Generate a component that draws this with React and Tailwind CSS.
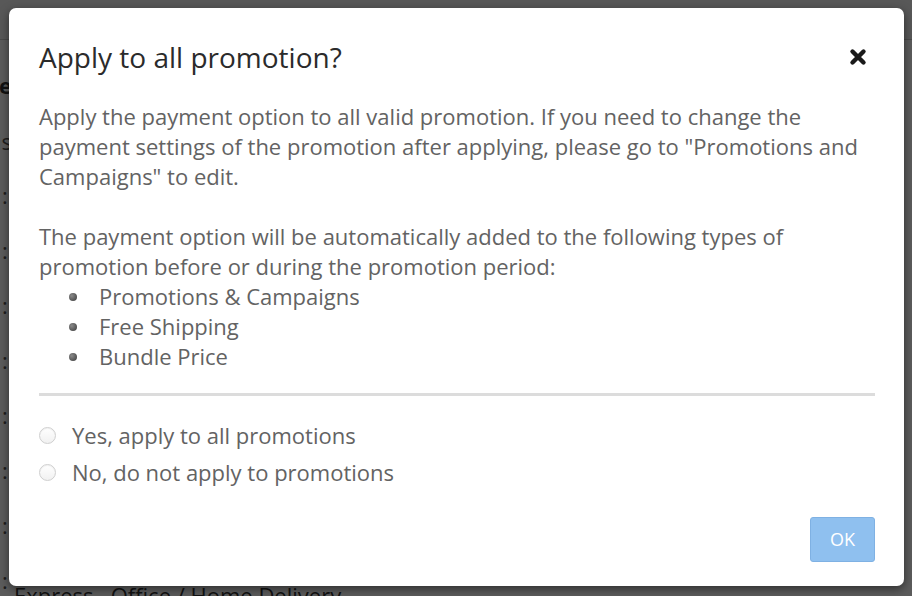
const font = { fontFamily: '"Open Sans", "Noto Sans", Arial, sans-serif' };

function Bullet() {
  return <span className="mt-[1px] h-[8px] w-[8px] shrink-0 rounded-full bg-[radial-gradient(circle_at_35%_35%,#8a8a8a,#3a3a3a)]" />;
}

function Radio({ label }) {
  return (
    <label className="flex h-[37px] items-center gap-[16px]">
      <span className="h-[17px] w-[17px] shrink-0 rounded-full border border-[#cfcfcf] bg-[linear-gradient(#ffffff,#f1f1f1)] shadow-[inset_0_1px_1px_rgba(0,0,0,0.06)]" />
      <span>{label}</span>
    </label>
  );
}

function CloseIcon() {
  return (
    <svg width="20" height="20" viewBox="0 0 20 20">
      <path d="M4.5 4.5 L15.5 15.5 M15.5 4.5 L4.5 15.5" stroke="#1a1a1a" strokeWidth="4.4" strokeLinecap="round" />
    </svg>
  );
}

function Tail({ children, className = "" }) {
  return (
    <div className={"flex w-[12px] justify-end overflow-hidden whitespace-nowrap " + className}>
      <span>{children}</span>
    </div>
  );
}

export default function App() {
  const items = ["Promotions & Campaigns", "Free Shipping", "Bundle Price"];
  return (
    <div className="relative h-[596px] w-[912px] overflow-hidden bg-white text-[#333]" style={font}>
      {/* page behind the dialog */}
      <div className="flex flex-col">
        <div className="h-[40px] border-b border-[#ccc] bg-[#f4f4f4]" />
        <div className="flex flex-col pt-[30px] text-[22px] leading-[30px]">
          <Tail className="font-bold">Shipping Fee Schedule</Tail>
          <Tail className="mt-[26px] text-[#555]">Methods</Tail>
          <div className="mt-[24px] flex flex-col gap-[25px] pl-[2px] text-[#555]">
            <div>:</div><div>:</div><div>:</div><div>:</div><div>:</div><div>:</div><div>:</div><div>:</div>
          </div>
        </div>
      </div>
      <div className="absolute bottom-[-16px] left-[14px] text-[22px] text-[#333]">Express &nbsp;&nbsp;Office / Home Delivery</div>

      {/* overlay */}
      <div className="absolute inset-0 flex bg-black/[0.64] pb-[10px] pl-[9px] pr-[8px] pt-[8px]">
        <div className="flex flex-1 flex-col rounded-[7px] bg-white pb-[24px] pl-[30px] pr-[29px] pt-[31px] shadow-[0_3px_10px_rgba(0,0,0,0.5)]">
          <div className="flex items-center justify-between">
            <h2 className="text-[28px] leading-[36px] text-[#2b2b2b]">Apply to all promotion?</h2>
            <span className="mr-[7px]"><CloseIcon /></span>
          </div>
          <div className="mt-[26px] text-[22px] leading-[30px] text-[#636363]">
            <p>
              Apply the payment option to all valid promotion. If you need to change the payment settings of the
              promotion after applying, please go to "Promotions and Campaigns" to edit.
            </p>
            <p className="mt-[30px]">
              The payment option will be automatically added to the following types of promotion before or during the
              promotion period:
            </p>
            <ul className="flex flex-col">
              {items.map((t) => (
                <li key={t} className="flex items-center gap-[22px] pl-[30px]">
                  <Bullet />
                  <span>{t}</span>
                </li>
              ))}
            </ul>
          </div>
          <div className="mt-[22px] h-[3px] bg-[#dcdcdc]" />
          <div className="mt-[21px] flex flex-col text-[22px] text-[#636363]">
            <Radio label="Yes, apply to all promotions" />
            <Radio label="No, do not apply to promotions" />
          </div>
          <div className="mt-auto flex justify-end">
            <button className="h-[45px] w-[65px] rounded-[3px] border border-[#7fb1e3] bg-[#8fc0ef] text-[18px] text-white">
              OK
            </button>
          </div>
        </div>
      </div>
    </div>
  );
}
